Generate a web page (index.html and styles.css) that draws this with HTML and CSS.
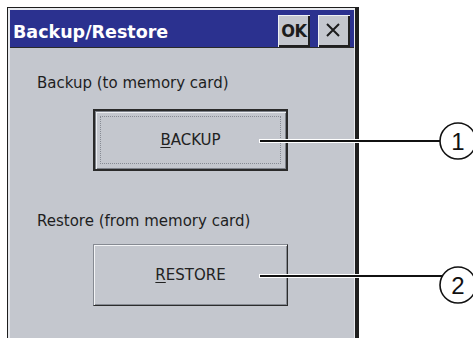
FILE: index.html
```html
<!DOCTYPE html>
<html lang="en">
<head>
<meta charset="UTF-8">
<meta name="viewport" content="width=device-width, initial-scale=1.0">
<title>Backup/Restore</title>
<link rel="stylesheet" href="styles.css">
</head>
<body>
<div class="window">
    <div class="titlebar">
        <span class="title">Backup/Restore</span>
        <button class="tb-btn ok">OK</button>
        <button class="tb-btn close">
            <svg width="14" height="14" viewBox="0 0 14 14">
                <path d="M1 1 L13 13 M13 1 L1 13" stroke="#1c1c1c" stroke-width="2" fill="none"/>
            </svg>
        </button>
    </div>
    <div class="content">
        <p class="label">Backup (to memory card)</p>
        <button class="btn focused"><u>B</u>ACKUP</button>
        <p class="label second">Restore (from memory card)</p>
        <button class="btn"><u>R</u>ESTORE</button>
    </div>
</div>

<!-- leader lines and position numbers -->
<svg class="callouts" width="473" height="338" viewBox="0 0 473 338">
    <line x1="259" y1="141" x2="441" y2="141" stroke="#fff" stroke-width="4"/>
    <line x1="260" y1="141" x2="441" y2="141" stroke="#111" stroke-width="2"/>
    <circle cx="458" cy="141" r="18" fill="#fff" stroke="#111" stroke-width="1.6"/>
    <text x="458" y="150" class="num">1</text>

    <line x1="259" y1="276" x2="442" y2="276" stroke="#fff" stroke-width="4"/>
    <line x1="260" y1="276" x2="442" y2="276" stroke="#111" stroke-width="2"/>
    <circle cx="458" cy="285" r="18" fill="#fff" stroke="#111" stroke-width="1.6"/>
    <text x="458" y="294" class="num">2</text>
</svg>
</body>
</html>
```

FILE: styles.css
```css
body {
    margin: 0;
    background-color: #fff;
    overflow: hidden;
    font-family: "DejaVu Sans", sans-serif;
    height: 338px;
}
.window {
    margin: 7px 0 0 7px;
    width: 352px;
    height: 340px;
    box-sizing: border-box;
    border-top: 1px solid #1e1e1e;
    border-left: 1px solid #1e1e1e;
    border-right: 4px solid #1e1e1e;
    padding: 2px 1px 0 2px;
    background-color: #e8eaee;
    display: flex;
    flex-direction: column;
}
.titlebar {
    height: 37px;
    flex-shrink: 0;
    background-color: #2b318f;
    border-bottom: 1px solid #2a2a2a;
    display: flex;
    align-items: flex-end;
    gap: 8px;
    padding: 0 4px 0 3px;
}
.title {
    color: #fff;
    font-weight: bold;
    font-size: 17.5px;
    line-height: 20px;
    align-self: flex-start;
    margin-top: 12px;
    margin-right: auto;
}
.tb-btn {
    width: 32px;
    height: 32px;
    box-sizing: border-box;
    padding: 0;
    margin: 0;
    background-color: #c4c7ce;
    border: none;
    box-shadow: inset 1px 1px #eef0f3, inset -2px -2px #202020;
    display: flex;
    align-items: center;
    justify-content: center;
}
.ok {
    font-family: "DejaVu Sans Condensed", "DejaVu Sans", sans-serif;
    font-stretch: condensed;
    font-weight: bold;
    font-size: 18px;
    color: #1c1c1c;
    padding-bottom: 2px;
    letter-spacing: -0.5px;
}
.close svg {
    margin: 0 2px 2px 0;
}
.content {
    flex: 1;
    background-color: #c4c7ce;
    padding: 26px 0 0 27px;
    display: flex;
    flex-direction: column;
    align-items: flex-start;
}
.label {
    margin: 0 0 17px 0;
    font-size: 15px;
    line-height: 18px;
    color: #1e1e1e;
}
.label.second {
    margin: 41px 0 14px 0;
}
.btn {
    position: relative;
    margin: 0 0 0 56px;
    width: 195px;
    height: 62px;
    box-sizing: border-box;
    padding: 0;
    font-family: "DejaVu Sans", sans-serif;
    font-size: 15px;
    color: #222;
    background-color: #c4c7ce;
    border: 1px solid;
    border-color: #868a92 #2c2c2c #2c2c2c #868a92;
    box-shadow: inset 1px 1px #f3f4f6, inset -1px -1px #878b93;
}
.btn u {
    text-underline-offset: 2px;
}
.btn.focused {
    border: 2px solid #2a2a2a;
    box-shadow: inset 1px 1px #7d8189, inset 2px 2px #eceef1, inset -1px -1px #7d8189;
}
.btn.focused::after {
    content: "";
    position: absolute;
    top: 5px;
    left: 5px;
    right: 5px;
    bottom: 5px;
    border: 1px dotted #878b94;
}
.callouts {
    position: absolute;
    top: 0;
    left: 0;
}
.num {
    font-family: "Liberation Sans", Arial, sans-serif;
    font-size: 24px;
    text-anchor: middle;
    fill: #111;
}
```
